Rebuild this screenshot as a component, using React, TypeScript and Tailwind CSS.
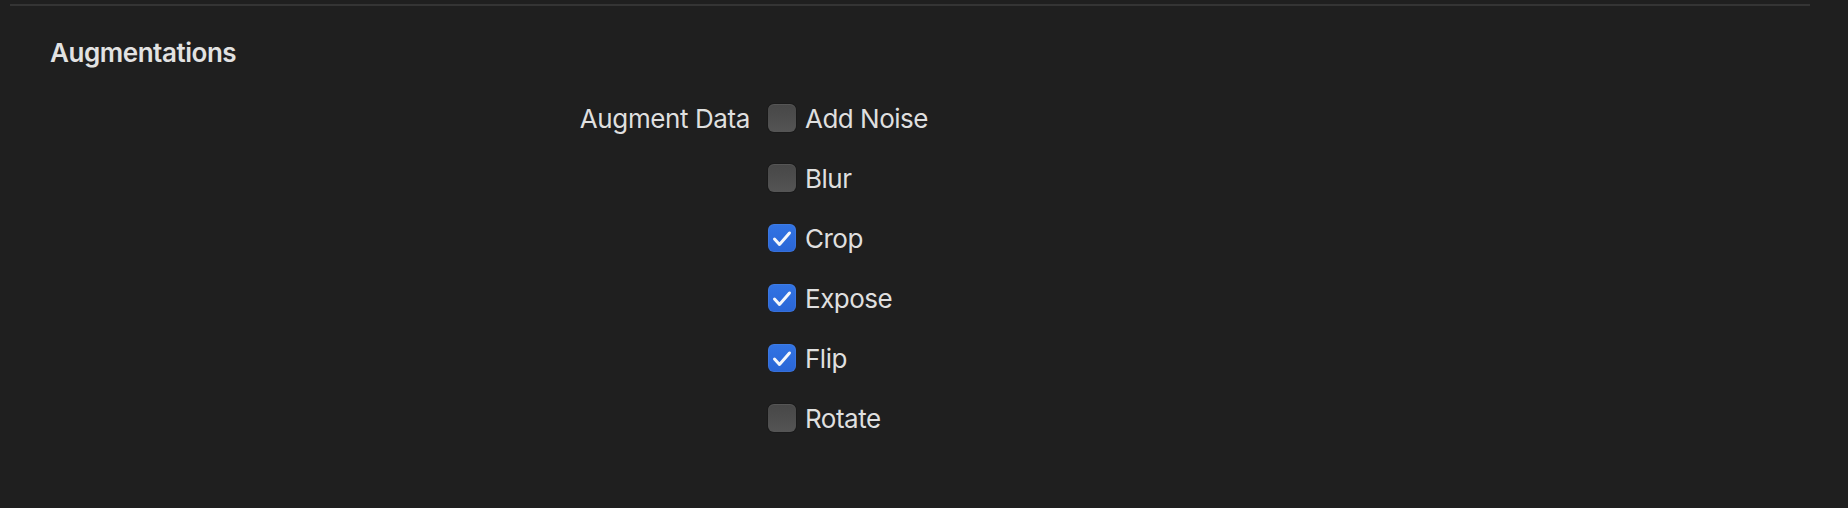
import { useState } from "react";

type Option = { key: string; label: string; checked: boolean };

const initial: Option[] = [
  { key: "noise", label: "Add Noise", checked: false },
  { key: "blur", label: "Blur", checked: false },
  { key: "crop", label: "Crop", checked: true },
  { key: "expose", label: "Expose", checked: true },
  { key: "flip", label: "Flip", checked: true },
  { key: "rotate", label: "Rotate", checked: false },
];

function Checkbox({ checked, onChange }: { checked: boolean; onChange: () => void }) {
  return (
    <button
      type="button"
      onClick={onChange}
      className={
        checked
          ? "flex h-[28px] w-[28px] shrink-0 items-center justify-center rounded-[6px] bg-gradient-to-b from-[#3274e4] to-[#2a66d6] shadow-[inset_0_0_0_1px_rgba(255,255,255,0.06)]"
          : "flex h-[28px] w-[28px] shrink-0 items-center justify-center rounded-[6px] bg-gradient-to-b from-[#474747] to-[#545454] shadow-[inset_0_1px_0_rgba(255,255,255,0.08),0_0_0_1px_rgba(0,0,0,0.15)]"
      }
    >
      {checked ? (
        <svg width="28" height="28" viewBox="0 0 28 28" fill="none">
          <path
            d="M6.5 15 L11.5 20.5 L21.5 9"
            stroke="#f4f6fb"
            strokeWidth="3"
            strokeLinecap="round"
            strokeLinejoin="round"
          />
        </svg>
      ) : null}
    </button>
  );
}

export default function App() {
  const [opts, setOpts] = useState<Option[]>(initial);

  function toggle(key: string) {
    setOpts((prev) => prev.map((o) => (o.key === key ? { ...o, checked: !o.checked } : o)));
  }

  return (
    <div className="min-h-screen w-full bg-[#1f1f1f] font-['Inter',sans-serif] text-[#dfdfdf]">
      <div className="pl-[10px] pr-[38px] pt-[4px]">
        <div className="h-[2px] bg-[#343434]" />
      </div>

      <div className="pl-[50px] pt-[31px]">
        <h2 className="text-[26px] font-semibold leading-[32px] tracking-[-0.45px] text-[#e2e2e2]">
          Augmentations
        </h2>
      </div>

      {/* Form */}
      <div className="mt-[35px] flex">
        <div className="w-[750px] shrink-0 text-right">
          <div className="flex h-[28px] items-center justify-end text-[26px] tracking-[-0.4px]">
            Augment Data
          </div>
        </div>
        <div className="ml-[18px] flex flex-col gap-[32px]">
          {opts.map((o) => (
            <label key={o.key} className="flex h-[28px] cursor-default items-center gap-[9px]">
              <Checkbox checked={o.checked} onChange={() => toggle(o.key)} />
              <span className="text-[26px] tracking-[-0.5px]">{o.label}</span>
            </label>
          ))}
        </div>
      </div>
    </div>
  );
}
